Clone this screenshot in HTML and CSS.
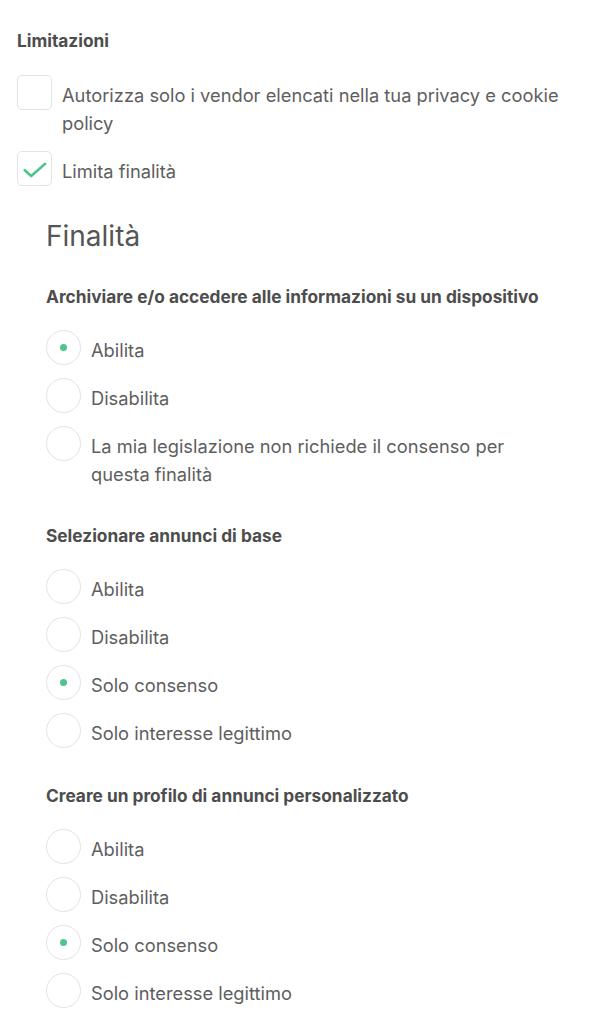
FILE: index.html
```html
<!DOCTYPE html>
<html lang="it">
<head>
<meta charset="utf-8">
<link rel="stylesheet" href="styles.css">
</head>
<body>
<div class="page">
  <section class="limits">
    <h3 class="label-title">Limitazioni</h3>
    <div class="check-list">
      <label class="check-item">
        <span class="box"></span>
        <span class="text">Autorizza solo i vendor elencati nella tua privacy e cookie policy</span>
      </label>
      <label class="check-item">
        <span class="box checked">
          <svg class="tick" viewBox="0 0 24 16" width="24" height="16"><path d="M1.8 8.2L8.2 14L22.2 1.8" fill="none" stroke="#4fc48d" stroke-width="2.6" stroke-linecap="round" stroke-linejoin="round"/></svg>
        </span>
        <span class="text">Limita finalità</span>
      </label>
    </div>
  </section>

  <section class="purposes">
    <h2 class="purposes-title">Finalità</h2>

    <div class="group">
      <h3 class="label-title">Archiviare e/o accedere alle informazioni su un dispositivo</h3>
      <div class="radio-list">
        <label class="radio-item"><span class="radio on"></span><span class="text">Abilita</span></label>
        <label class="radio-item"><span class="radio"></span><span class="text">Disabilita</span></label>
        <label class="radio-item"><span class="radio"></span><span class="text">La mia legislazione non richiede il consenso per questa finalità</span></label>
      </div>
    </div>

    <div class="group">
      <h3 class="label-title">Selezionare annunci di base</h3>
      <div class="radio-list">
        <label class="radio-item"><span class="radio"></span><span class="text">Abilita</span></label>
        <label class="radio-item"><span class="radio"></span><span class="text">Disabilita</span></label>
        <label class="radio-item"><span class="radio on"></span><span class="text">Solo consenso</span></label>
        <label class="radio-item"><span class="radio"></span><span class="text">Solo interesse legittimo</span></label>
      </div>
    </div>

    <div class="group">
      <h3 class="label-title">Creare un profilo di annunci personalizzato</h3>
      <div class="radio-list">
        <label class="radio-item"><span class="radio"></span><span class="text">Abilita</span></label>
        <label class="radio-item"><span class="radio"></span><span class="text">Disabilita</span></label>
        <label class="radio-item"><span class="radio on"></span><span class="text">Solo consenso</span></label>
        <label class="radio-item"><span class="radio"></span><span class="text">Solo interesse legittimo</span></label>
      </div>
    </div>
  </section>
</div>
</body>
</html>
```
FILE: styles.css
```css
* { box-sizing: border-box; }
html, body { margin: 0; padding: 0; background: #fff; }
body {
  font-family: "Inter", "Liberation Sans", sans-serif;
  color: #5e5e5e;
  font-size: 18.3px;
}
.page {
  padding: 29px 10px 0 17px;
  width: 590px;
}
.label-title {
  margin: 0;
  font-size: 17.3px;
  font-weight: 700;
  line-height: 24px;
  color: #4d4d4d;
}
.check-list {
  margin-top: 22px;
  display: flex;
  flex-direction: column;
  gap: 14px;
}
.check-item, .radio-item {
  display: flex;
  align-items: flex-start;
  gap: 10px;
}
.box {
  flex: 0 0 35px;
  width: 35px;
  height: 35px;
  border: 1px solid #e3e3e3;
  border-radius: 5px;
  display: flex;
  align-items: center;
  justify-content: center;
}
.tick { margin-top: 2px; }
.text {
  line-height: 28px;
  padding-top: 6px;
  max-width: 510px;
}
.purposes {
  padding-left: 29px;
  margin-top: 33px;
}
.purposes-title {
  margin: 0;
  font-size: 28px;
  font-weight: 400;
  line-height: 34px;
  color: #555;
}
.group { margin-top: 32px; }
.group + .group { margin-top: 36px; }
.radio-list {
  margin-top: 21px;
  display: flex;
  flex-direction: column;
  gap: 13px;
}
.radio {
  flex: 0 0 35px;
  width: 35px;
  height: 35px;
  border: 1px solid #e3e3e3;
  border-radius: 50%;
  display: flex;
  align-items: center;
  justify-content: center;
}
.radio.on::after {
  content: "";
  width: 7px;
  height: 7px;
  border-radius: 50%;
  background: #4fc48d;
}
.radio-item .text { max-width: 450px; }
```
